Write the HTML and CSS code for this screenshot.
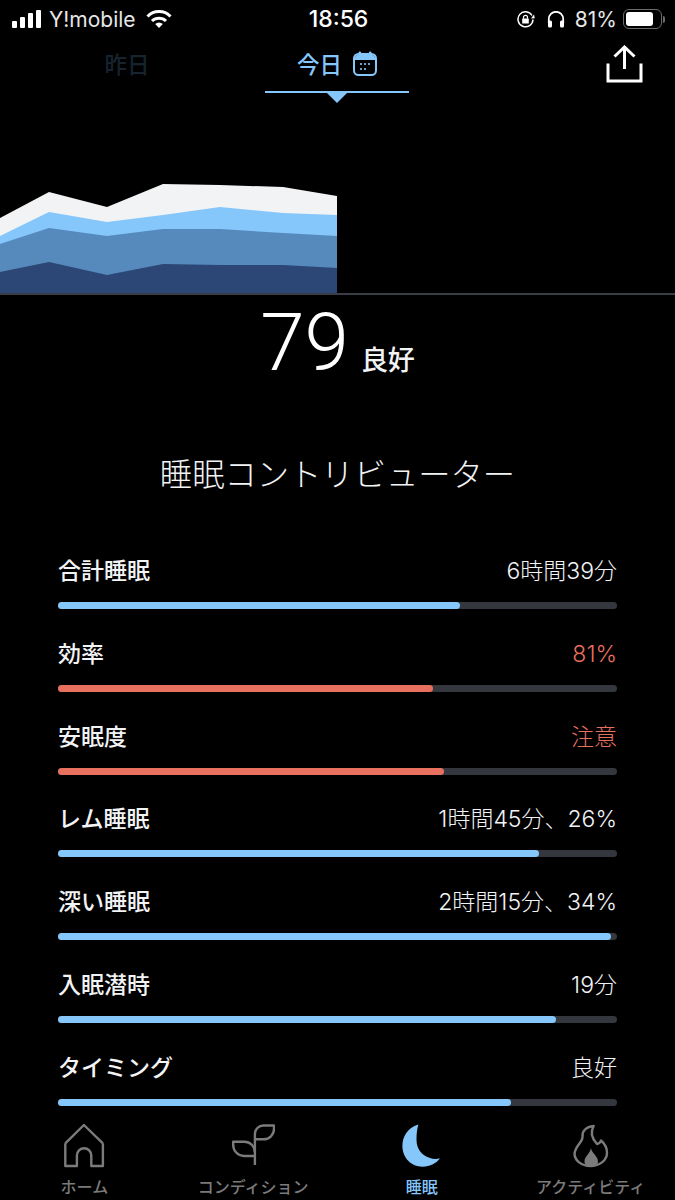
FILE: index.html
```html
<!DOCTYPE html>
<html lang="ja">
<head>
  <meta charset="UTF-8">
  <meta name="viewport" content="width=device-width, initial-scale=1.0">
  <title>睡眠</title>
  <link rel="stylesheet" href="styles.css">
</head>
<body>
  <div class="status-bar">
    <div class="status-left">
      <div class="signal"><span class="s1"></span><span class="s2"></span><span class="s3"></span><span class="s4"></span></div>
      <span class="carrier">Y!mobile</span>
      <svg class="wifi" width="26" height="18" viewBox="0 0 26 18" fill="none" stroke="#fff" stroke-width="3">
        <path d="M1.500 6.500a16 16 0 0 1 23 0"/>
        <path d="M6 11a10 10 0 0 1 14 0"/>
        <path d="M13 18l-3.800-4a5.500 5.500 0 0 1 7.600 0z" fill="#fff" stroke="none"/>
      </svg>
    </div>
    <div class="status-time">18:56</div>
    <div class="status-right">
      <svg width="18" height="17" viewBox="0 0 18 17" fill="none" stroke="#fff" stroke-width="1.500">
        <path d="M15 4.500A7.500 7.500 0 1 0 16 8.500"/>
        <path d="M14 7.500l3.800-.2-.8-3.800z" fill="#fff" stroke="none"/>
        <rect x="5.200" y="7.600" width="6.600" height="5" rx=".6" fill="#fff" stroke="none"/>
        <path d="M6.500 7.800V6.300a2 2 0 0 1 4 0v1.500" stroke-width="1.200"/>
      </svg>
      <svg class="phones" width="18" height="17" viewBox="0 0 18 17" fill="none" stroke="#fff" stroke-width="1.800">
        <path d="M1.800 12V8a7.200 7.200 0 0 1 14.400 0v4"/>
        <rect x="1" y="9.500" width="4" height="7" rx="1.500" fill="#fff" stroke="none"/>
        <rect x="13" y="9.500" width="4" height="7" rx="1.500" fill="#fff" stroke="none"/>
      </svg>
      <span class="battery-pct">81%</span>
      <div class="battery"><div class="battery-fill"></div></div>
      <div class="battery-cap"></div>
    </div>
  </div>

  <div class="tabs">
    <div class="tab tab-dim">昨日</div>
    <div class="tab tab-active">
      <span>今日</span>
      <svg width="24" height="25" viewBox="0 0 24 25" fill="none">
        <rect x="1" y="3" width="22" height="21" rx="4.500" stroke="#85c6fb" stroke-width="2"/>
        <path d="M2 9V7a3 3 0 0 1 3-3h14a3 3 0 0 1 3 3v2z" fill="#85c6fb"/>
        <rect x="5.500" y="0.500" width="2.600" height="4" rx="1.200" fill="#85c6fb"/>
        <rect x="15.900" y="0.500" width="2.600" height="4" rx="1.200" fill="#85c6fb"/>
        <g fill="#85c6fb">
          <circle cx="8" cy="13" r="1.100"/><circle cx="12" cy="13" r="1.100"/><circle cx="16" cy="13" r="1.100"/>
          <circle cx="8" cy="18" r="1.100"/><circle cx="12" cy="18" r="1.100"/>
        </g>
      </svg>
      <div class="tab-arrow"></div>
    </div>
    <svg class="share" width="37" height="38" viewBox="0 0 37 38" fill="none" stroke="#fff" stroke-width="3">
      <path d="M18.500 24V2"/>
      <path d="M8.500 11.500L18.500 2l10 9.500"/>
      <path d="M2 18.500V36H35V18.500"/>
    </svg>
  </div>

  <svg class="chart" width="675" height="190" viewBox="0 103 675 190">
    <path fill="#f2f3f5" d="M0 218L49 192L107 207L163 184L220 185L283 187L337 196V293H0Z"/>
    <path fill="#85c6fb" d="M0 236L49 212L107 222L163 215L220 207L283 213L337 215V293H0Z"/>
    <path fill="#5689bc" d="M0 244L49 228L107 236L163 229L220 229L283 233L337 236V293H0Z"/>
    <path fill="#2c4675" d="M0 272L49 262L107 275L163 264L220 265L283 265L337 268V293H0Z"/>
  </svg>
  <div class="chart-line"></div>

  <div class="score">
    <span class="score-num">79</span>
    <span class="score-label">良好</span>
  </div>

  <h2 class="section-title">睡眠コントリビューター</h2>

  <div class="rows">
    <div class="row">
      <div class="row-head"><span class="row-name">合計睡眠</span><span class="row-value">6時間39分</span></div>
      <div class="track"><div class="fill" style="width: 72%"></div></div>
    </div>
    <div class="row">
      <div class="row-head"><span class="row-name">効率</span><span class="row-value warn">81%</span></div>
      <div class="track"><div class="fill fill-warn" style="width: 67%"></div></div>
    </div>
    <div class="row">
      <div class="row-head"><span class="row-name">安眠度</span><span class="row-value warn">注意</span></div>
      <div class="track"><div class="fill fill-warn" style="width: 69%"></div></div>
    </div>
    <div class="row">
      <div class="row-head"><span class="row-name">レム睡眠</span><span class="row-value">1時間45分、26%</span></div>
      <div class="track"><div class="fill" style="width: 86%"></div></div>
    </div>
    <div class="row">
      <div class="row-head"><span class="row-name">深い睡眠</span><span class="row-value">2時間15分、34%</span></div>
      <div class="track"><div class="fill" style="width: 99%"></div></div>
    </div>
    <div class="row">
      <div class="row-head"><span class="row-name">入眠潜時</span><span class="row-value">19分</span></div>
      <div class="track"><div class="fill" style="width: 89%"></div></div>
    </div>
    <div class="row">
      <div class="row-head"><span class="row-name">タイミング</span><span class="row-value">良好</span></div>
      <div class="track"><div class="fill" style="width: 81%"></div></div>
    </div>
  </div>

  <div class="nav">
    <div class="nav-item">
      <svg width="44" height="44" viewBox="0 0 44 44" fill="none" stroke="#7b7b7b" stroke-width="2.400" stroke-linejoin="round">
        <path d="M3.300 19.300L21.900 1L40.900 19.300"/>
        <path d="M3.300 19.300V42H14.900V31.500a7.200 7.200 0 0 1 14.400 0V42H40.900V19.300"/>
      </svg>
      <span>ホーム</span>
    </div>
    <div class="nav-item">
      <svg width="44" height="44" viewBox="0 0 44 44" fill="none" stroke="#7b7b7b" stroke-width="2.400" stroke-linejoin="round">
        <path d="M23.900 41V10a8.500 8.500 0 0 1 8.500-8.500H43V5a10.300 10.300 0 0 1-10.300 10.300H24"/>
        <path d="M23.900 32H13A11 11 0 0 1 2.200 20.500V17.700H13.500a10.400 10.400 0 0 1 10.400 10.400"/>
      </svg>
      <span>コンディション</span>
    </div>
    <div class="nav-item nav-active">
      <svg width="44" height="44" viewBox="0 0 44 44">
        <path fill="#85c6fb" d="M18.400 .5C7 4 2.400 13 2.400 22c0 12 9 20.700 20 20.700 8 0 14-3.500 17.600-8.400-3 1-7 1-10-.3C21 31.500 16.500 24 16.500 15.500 16.500 10 17 5 18.400 .5z"/>
      </svg>
      <span>睡眠</span>
    </div>
    <div class="nav-item">
      <svg width="44" height="44" viewBox="0 0 44 44" fill="none" stroke="#7b7b7b" stroke-width="2.400" stroke-linejoin="round">
        <path d="M24.700 2C17 3 13 7 13.500 12.500 14 18 7 21 5.600 29 5 36 12 42 21.500 42 31 42 38 36 38 29 38 23 35 19 32 16.500 31.500 18.500 30 19.500 28 20 23.500 15 20.500 9 24.700 2z"/>
        <path fill="#7b7b7b" stroke="none" d="M22 24C22.500 29 29 32 29 37.500 29 41 26 42.500 22 42.500 18 42.500 15.500 41 15.500 37.500 15.500 32 21 30 22 24z"/>
      </svg>
      <span>アクティビティ</span>
    </div>
  </div>
</body>
</html>
```

FILE: styles.css
```css
* {
  box-sizing: border-box;
}

html, body {
  margin: 0;
  height: 1200px;
  overflow: hidden;
}

body {
  display: flex;
  flex-direction: column;
  background-color: #000;
  color: #f2f3f5;
  font-family: "Noto Sans CJK JP", "Noto Sans", sans-serif;
}

/* status bar */
.status-bar {
  flex: none;
  display: flex;
  align-items: center;
  justify-content: space-between;
  height: 38px;
  padding: 0 10px 0 12px;
  font-family: Inter, "Liberation Sans", sans-serif;
  color: #fff;
}

.status-left, .status-right {
  display: flex;
  align-items: center;
}

.status-left {
  width: 230px;
}

.carrier {
  margin-left: 8px;
  font-size: 21px;
  color: #e6e6e6;
}

.wifi {
  margin-left: 10px;
}

.signal {
  display: flex;
  align-items: flex-end;
  gap: 3px;
  height: 18px;
}

.signal span {
  width: 5px;
  background-color: #fff;
  border-radius: 1px;
}

.s1 { height: 7px; }
.s2 { height: 11px; }
.s3 { height: 15px; }
.s4 { height: 18px; width: 6px; }

.status-time {
  font-size: 23px;
  font-weight: 500;
}

.status-right {
  width: 230px;
  justify-content: flex-end;
}

.phones {
  margin-left: 12px;
}

.battery-pct {
  margin-left: 10px;
  font-size: 21px;
  color: #e6e6e6;
}

.battery {
  width: 39px;
  height: 20px;
  margin-left: 6px;
  padding: 2px;
  border: 1.500px solid #6b6b6b;
  border-radius: 6px;
}

.battery-fill {
  width: 81%;
  height: 100%;
  background-color: #fff;
  border-radius: 3px;
}

.battery-cap {
  width: 2px;
  height: 7px;
  margin-left: 1px;
  background-color: #6b6b6b;
  border-radius: 0 2px 2px 0;
}

/* date tabs */
.tabs {
  flex: none;
  display: flex;
  height: 65px;
  padding-left: 55px;
  gap: 66px;
}

.tab {
  position: relative;
  display: flex;
  align-items: center;
  justify-content: center;
  gap: 11px;
  width: 144px;
  height: 55px;
  padding-bottom: 3px;
  font-size: 22.500px;
  font-weight: 500;
}

.tab-dim {
  color: #16242f;
  padding-bottom: 5px;
}

.tab-active {
  color: #85c6fb;
  border-bottom: 2px solid #85c6fb;
}

.tab-arrow {
  position: absolute;
  left: 62px;
  bottom: -12px;
  width: 0;
  height: 0;
  border-left: 10.500px solid transparent;
  border-right: 10.500px solid transparent;
  border-top: 10px solid #85c6fb;
}

.share {
  margin-left: auto;
  margin-right: 32px;
  margin-top: 7px;
}

/* chart */
.chart {
  display: block;
  flex: none;
}

.chart-line {
  flex: none;
  height: 2px;
  background-color: #3a3d45;
}

/* score */
.score {
  flex: none;
  display: flex;
  align-items: baseline;
  justify-content: center;
  gap: 12px;
  height: 95px;
  padding-top: 1px;
  line-height: 95px;
}

.score-num {
  font-family: Roboto, sans-serif;
  font-size: 80px;
  font-weight: 350;
  color: #fff;
}

.score-label {
  font-size: 27px;
  font-weight: 500;
}

.section-title {
  flex: none;
  margin: 57px 0 0;
  height: 50px;
  font-size: 32.300px;
  font-weight: 300;
  line-height: 50px;
  text-align: center;
}

/* contributor rows */
.rows {
  flex: 1;
  min-height: 0;
  margin-top: 57px;
  padding: 0 58px;
}

.row {
  height: 82.800px;
}

.row:last-child {
  height: 55px;
}

.row-head {
  display: flex;
  justify-content: space-between;
  height: 34px;
  font-size: 23px;
  line-height: 34px;
}

.row-name {
  font-weight: 500;
  line-height: 31px;
}

.row-value {
  font-family: Inter, "Noto Sans CJK JP", sans-serif;
  font-weight: 300;
  line-height: 35px;
}

.warn {
  color: #e8705f;
}

.track {
  height: 7px;
  margin-top: 14px;
  background-color: #34373d;
  border-radius: 4px;
}

.fill {
  height: 100%;
  background-color: #85c6fb;
  border-radius: 4px;
}

.fill-warn {
  background-color: #e8705f;
}

/* bottom nav */
.nav {
  flex: none;
  display: flex;
  height: 88px;
  padding-top: 12px;
  background-color: #000;
}

.nav-item {
  flex: 1;
  display: flex;
  flex-direction: column;
  align-items: center;
  font-size: 16px;
  font-weight: 500;
  line-height: 24px;
  color: #7b7b7b;
}

.nav-item svg {
  flex: none;
}

.nav-item span {
  margin-top: 6px;
}

.nav-active {
  color: #85c6fb;
}
```
